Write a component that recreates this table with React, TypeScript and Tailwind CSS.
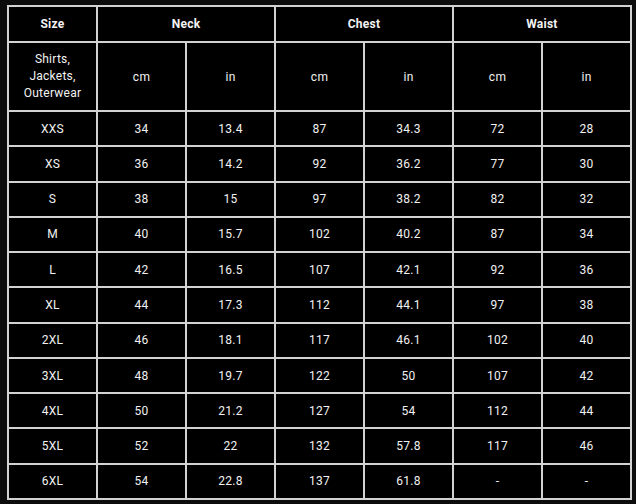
const sizes: [string, string, string, string, string, string, string][] = [
  ["XXS", "34", "13.4", "87", "34.3", "72", "28"],
  ["XS", "36", "14.2", "92", "36.2", "77", "30"],
  ["S", "38", "15", "97", "38.2", "82", "32"],
  ["M", "40", "15.7", "102", "40.2", "87", "34"],
  ["L", "42", "16.5", "107", "42.1", "92", "36"],
  ["XL", "44", "17.3", "112", "44.1", "97", "38"],
  ["2XL", "46", "18.1", "117", "46.1", "102", "40"],
  ["3XL", "48", "19.7", "122", "50", "107", "42"],
  ["4XL", "50", "21.2", "127", "54", "112", "44"],
  ["5XL", "52", "22", "132", "57.8", "117", "46"],
  ["6XL", "54", "22.8", "137", "61.8", "-", "-"],
];

const cell = "bg-black flex items-center justify-center text-center";

export default function App() {
  return (
    <div
      className="w-[636px] h-[504px] bg-[#0c0c0c] pt-[5px] pl-[7px]"
      style={{ fontFamily: "Roboto, 'Liberation Sans', sans-serif" }}
    >
      <div className="w-[625px] h-[495px] bg-[#d2d2d2] p-[2px] grid grid-cols-7 grid-rows-[34px_67px_repeat(11,minmax(0,1fr))] gap-[2px] text-[12px] tracking-[0.25px] text-[#f2f2f2]">
        {/* group header */}
        <div className={`${cell} font-bold`}>Size</div>
        <div className={`${cell} col-span-2 font-bold`}>Neck</div>
        <div className={`${cell} col-span-2 font-bold`}>Chest</div>
        <div className={`${cell} col-span-2 font-bold`}>Waist</div>

        {/* units */}
        <div className={`${cell} leading-[16.7px]`}>
          Shirts,
          <br />
          Jackets,
          <br />
          Outerwear
        </div>
        {["cm", "in", "cm", "in", "cm", "in"].map((u, i) => (
          <div key={i} className={cell}>
            {u}
          </div>
        ))}

        {sizes.map((row) =>
          row.map((v, i) => (
            <div key={row[0] + i} className={cell}>
              {v}
            </div>
          ))
        )}
      </div>
    </div>
  );
}
